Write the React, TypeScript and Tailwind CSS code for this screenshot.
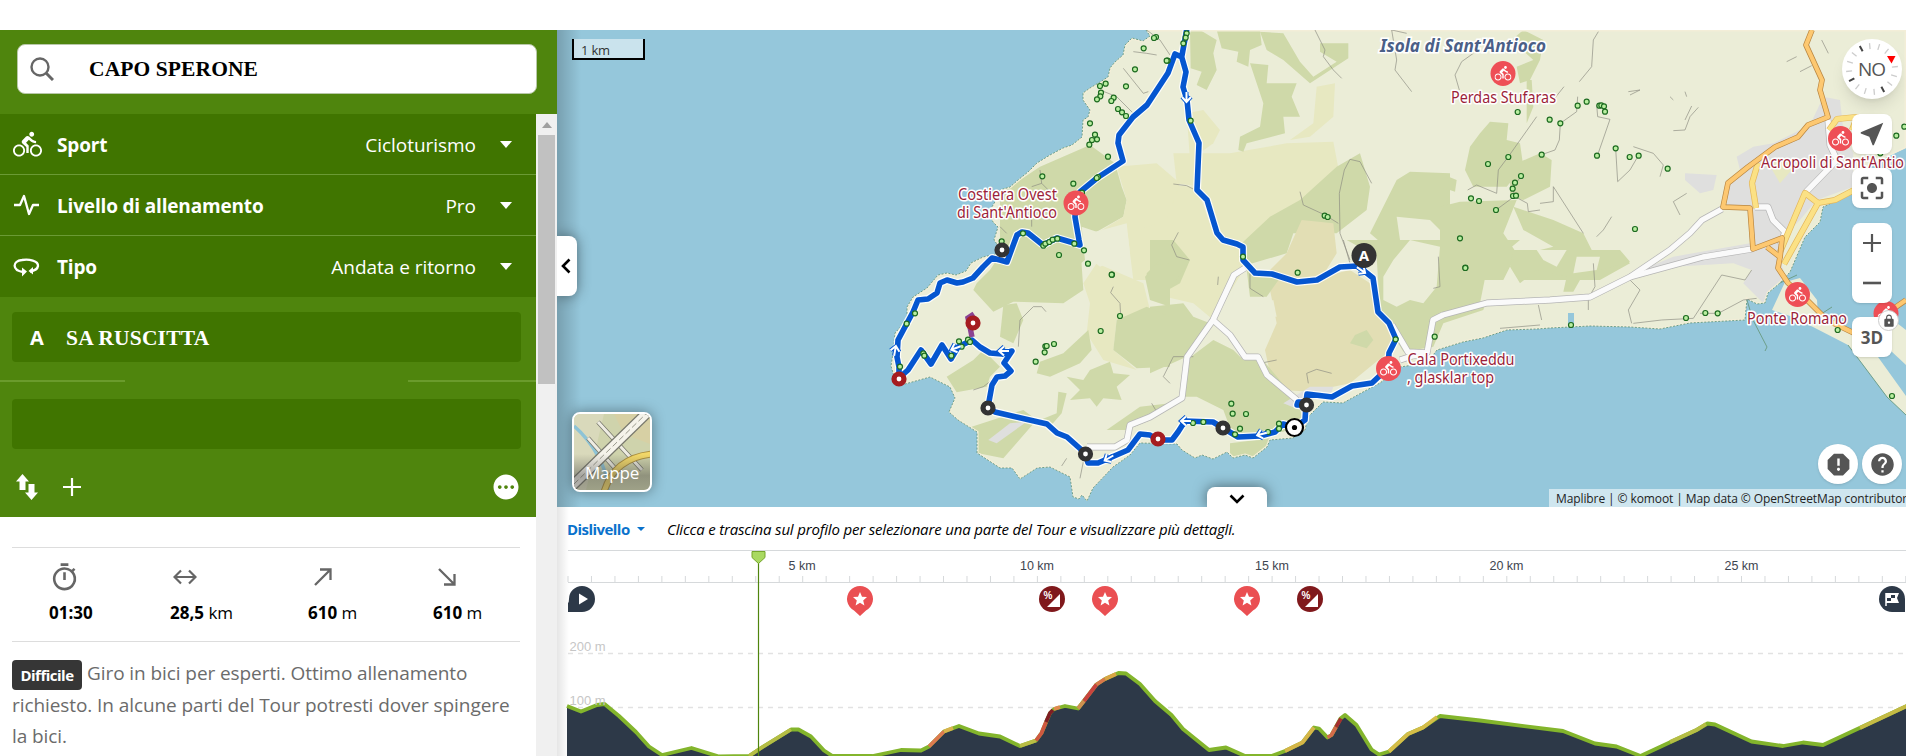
import React from "react";
import {
  MdCenterFocusStrong,
  MdDirectionsBike,
  MdHelp,
  MdLock,
  MdNearMe,
  MdOutlineTimer,
  MdPending,
  MdReport,
} from "react-icons/md";

type Pt = [number, number];

const WATER = "#95c7db";
const LAND = "#ebedd7";
const GREEN = "#cfd9a9";
const YELLOW = "#e7e8c1";
const TAN = "#e2deb4";
const URBAN = "#dfdfde";

const TILES = {
  a: { x: 1000, y: 20 },
  b: { x: 1440, y: 20 },
  c: { x: 850, y: 240 },
  d: { x: 1150, y: 240 },
  e: { x: 1500, y: 250 },
};

function Tile({ id, children }: { id: keyof typeof TILES; children: React.ReactNode }) {
  const t = TILES[id];
  return <g transform={`translate(${t.x} ${t.y}) scale(0.33333)`}>{children}</g>;
}

const ISLAND =
  "1146,30 1150,36 1143,41 1132,38 1125,45 1123,55 1115,62 1110,68 1108,77 1100,82 1090,88 1083,93 1083,100 1090,110 1088,117 1083,120 1082,137 1072,145 1063,148 1050,155 1037,163 1028,172 1018,180 1010,187 1000,190 996,200 989,212 993,222 998,227 994,240 999,247 996,254 983,257 971,263 966,271 956,275 947,273 938,275 927,288 913,297 907,307 907,320 895,333 893,353 891,366 895,380 905,384 930,377 950,387 955,398 949,412 958,420 977,432 977,453 1000,468 1012,468 1020,479 1037,468 1050,467 1070,477 1073,497 1079,499 1082,495 1087,501 1093,488 1113,467 1130,455 1140,443 1177,444 1182,450 1195,458 1202,455 1213,459 1227,452 1233,458 1245,455 1253,458 1267,447 1270,440 1293,438 1305,430 1308,417 1323,402 1343,403 1363,392 1380,383 1388,377 1400,367 1427,363 1437,350 1463,342 1483,338 1507,330 1537,329 1550,328 1590,326 1630,327 1660,329 1690,323 1745,320 1747,299 1757,304 1765,303 1768,293 1780,283 1790,272 1805,237 1820,222 1823,207 1853,193 1870,165 1906,148 1906,30";

const GREENS: [keyof typeof TILES, string, string][] = [
  ["a", YELLOW, "520,400 690,400 860,370 1000,365 1020,470 960,520 900,600 720,670 640,640 600,500 530,490"],
  ["a", YELLOW, "390,490 590,500 640,640 730,690 690,780 400,780 380,620"],
  ["a", YELLOW, "950,200 1005,190 1000,290 930,350 870,360 940,310"],
  ["a", YELLOW, "560,280 610,270 660,330 640,370 570,420"],
  ["c", YELLOW, "700,130 740,70 880,130 900,210 800,240 790,330 860,390 760,360 710,280 720,190"],
  ["d", YELLOW, "0,0 270,0 280,90 190,240 130,190 0,160"],
  ["d", GREEN, "0,0 70,0 120,60 90,130 0,180"],
  ["d", GREEN, "0,200 100,190 130,230 180,250 110,350 0,400"],
  ["a", GREEN, "570,30 600,30 650,60 640,100 650,150 620,210 590,195 605,155 572,145"],
  ["a", GREEN, "650,30 780,30 785,75 750,90 745,140 710,125 715,95 665,85"],
  ["a", GREEN, "780,35 850,40 900,125 940,170 1010,125 960,95 960,70 1045,70 1045,115 930,190 850,120 800,90"],
  ["a", GREEN, "750,130 805,135 800,190 890,190 875,230 900,290 850,290 855,340 740,370 730,395 715,390 720,350 780,320 790,250 770,190"],
  ["a", GREEN, "0,510 60,480 120,440 270,375 345,430 365,500 380,540 370,590 290,635 245,620 255,720 180,780 0,780 0,590"],
  ["a", YELLOW, "350,440 470,430 540,490 500,600 390,640 290,640 370,590 380,540"],
  ["a", LAND, "270,640 380,610 390,700 300,740 250,700"],
  ["c", GREEN, "380,130 420,90 440,60 490,0 690,0 700,150 640,190 490,185 430,215 370,150"],
  ["a", GREEN, "810,590 900,540 1010,440 1080,400 1110,500 1100,570 1010,640 880,640 860,700 740,735 725,670"],
  ["a", TAN, "905,600 1000,610 1010,700 960,780 780,780 860,700"],
  ["a", GREEN, "440,760 520,680 570,720 530,780 440,780"],
  ["a", GREEN, "1110,640 1190,480 1230,455 1350,460 1350,780 1210,780 1180,700"],
  ["a", LAND, "1190,590 1290,600 1350,660 1270,700 1200,660"],
  ["d", TAN, "380,110 440,130 600,90 660,130 690,230 735,300 710,340 600,430 480,455 400,450 360,400 345,330 380,250 360,150"],
  ["d", GREEN, "290,90 400,100 350,170 300,170"],
  ["d", GREEN, "110,360 190,300 250,330 280,360 330,350 440,480 460,540 400,575 250,590 220,510 140,470 100,470"],
  ["d", GREEN, "240,610 360,595 350,620 310,655 240,650"],
  ["d", GREEN, "590,0 1110,0 1050,50 1000,210 880,250 850,320 760,335 690,220 680,50"],
  ["d", LAND, "700,110 730,60 780,0 870,20 860,140 820,190 780,180 740,200 700,180"],
  ["d", LAND, "1010,90 1200,40 1200,180 990,190"],
  ["d", LAND, "325,195 370,180 380,230 350,230"],
  ["d", GREEN, "615,285 650,270 670,300 650,325 600,310"],
  ["b", GREEN, "120,340 150,305 205,310 200,360 240,370 250,440 200,500 100,500 75,450 90,380"],
  ["b", GREEN, "0,560 60,545 230,540 190,640 230,700 190,780 0,780"],
  ["b", GREEN, "230,430 300,400 335,420 330,500 250,540 210,530 210,470"],
  ["b", GREEN, "220,560 340,600 430,640 460,700 540,695 570,730 480,780 240,780 260,700 340,680 250,630"],
  ["b", GREEN, "215,60 250,30 310,60 300,120 270,180 240,190 230,140 280,120"],
  ["b", GREEN, "260,180 275,180 280,260 260,310"],
  ["b", GREEN, "0,460 50,480 45,515 0,500"],
  ["e", GREEN, "40,0 360,0 390,35 300,60 240,90 220,125 190,125 200,80 110,60 60,100 30,50"],
  ["e", LAND, "110,0 200,0 170,50 130,30"],
  ["e", LAND, "230,20 300,20 290,60 220,70"],
  ["c", GREEN, "800,240 890,200 960,230 960,380 860,385 790,330"],
  ["c", GREEN, "885,110 920,75 960,70 960,200 900,180"],
  ["c", GREEN, "290,410 370,360 400,330 450,380 420,410 410,440 320,457"],
  ["c", GREEN, "365,560 520,510 560,540 460,655 385,640 380,590"],
  ["c", GREEN, "650,410 700,420 720,390 780,365 790,400 840,405 800,440 815,480 760,475 740,500 720,475 660,480 690,450"],
  ["c", GREEN, "560,400 570,365 640,340 715,270 725,330 690,370 600,410"],
  ["c", GREEN, "625,455 650,460 635,520 600,560 570,540 620,520"],
  ["c", GREEN, "460,195 500,190 520,240 490,310 450,290"],
  ["c", GREEN, "770,570 870,500 960,490 900,540 830,570"],
  ["c", URBAN, "415,600 480,550 530,545 440,610"],
  ["d", URBAN, "400,490 480,440 550,440 540,470 480,480 450,510"],
  ["b", URBAN, "870,480 900,450 890,410 940,380 1000,370 1110,315 1150,230 1200,240 1210,330 1240,400 1240,500 1130,540 1080,600 1040,640 1030,700 940,690 940,570 860,560"],
  ["b", URBAN, "735,460 830,465 820,510 780,520 735,480"],
  ["b", YELLOW, "985,430 1040,420 1055,450 1020,490"],
  ["e", URBAN, "410,65 520,20 750,-20 830,0 850,60 850,100 790,160 730,100 755,60 700,40 520,50"],
];

const PATHS: [keyof typeof TILES, string][] = [
  ["a", "M440,30 L480,60 510,105 M370,145 L430,220 445,215 M470,105 L440,100 400,95 M300,210 L350,230 400,280"],
  ["a", "M945,30 L975,90 970,110 1000,150 1025,175 M1220,40 L1175,30 1190,120 1185,150 1235,215"],
  ["a", "M900,515 L910,555 975,585 1015,610 M1115,490 L1080,425 1050,418 1033,450 1018,520 1020,640 1050,720 M520,492 L560,497 585,510 M535,637 L515,675 530,710 568,720"],
  ["a", "M0,620 L20,640 M120,450 L125,490 95,500 M125,490 L150,515 M95,560 L95,620"],
  ["b", "M475,35 L460,60 455,140 418,185 M372,200 L340,240 M290,290 L205,410 175,450 170,520 110,495 83,510 M413,230 L410,275 361,310 358,360 345,390 305,404 M470,255 L473,290 510,298 473,405 M527,385 L533,485 570,450 595,407"],
  ["b", "M243,468 L218,506 225,530 262,550 265,575 300,570 M300,550 L340,545 340,500 430,640 M515,590 L490,630 470,650 M580,380 L640,400 670,435 660,470 M168,570 L225,528 M100,100 L65,125 45,165 58,210"],
  ["b", "M735,215 L740,230 M690,230 L700,240 M775,262 L750,290 735,330 700,332 M735,300 L755,258 M1040,125 L1070,110 M1080,155 L1115,137 M1145,60 L1165,100 M740,520 L700,545 720,585 M565,215 L600,210 570,225"],
  ["d", "M580,0 L600,70 M865,50 L870,140 850,145 M205,110 L203,135 M300,100 L300,145 340,170 M475,430 L470,400 500,388 545,400 M130,350 L70,350 40,410 60,430 M330,370 L380,360"],
  ["e", "M280,40 L285,110 265,145 265,180 M390,90 L420,120 385,180 395,220 M0,235 L120,225 M115,165 L125,210 M400,220 L485,210 580,205 665,75 735,90 755,60 M600,190 L655,190 730,150 770,145"],
  ["c", "M370,450 L400,440 440,410 M505,320 L510,240 550,200 575,200 588,215 M790,140 L782,158 810,190 812,228 M650,655 L635,678 M700,665 L690,715 M905,490 L920,515"],
];

const CIRCLES: Record<string, Pt[]> = {
  a: [[560,40],[557,53],[550,70],[468,51],[462,54],[431,85],[503,122],[500,122],[405,148],[378,199],[317,191],[300,198],[303,218],[301,229],[291,238],[341,233],[334,243],[354,267],[366,277],[378,288],[270,310],[285,344],[291,358],[276,360],[268,374],[324,410],[127,469],[220,491],[294,471],[290,474],[246,518],[572,302],[69,640],[130,677],[136,671],[148,666],[158,659],[172,656],[223,671],[252,691],[177,705],[264,731],[336,764],[974,587],[983,591],[729,710],[893,758],[5,664]],
  b: [[233,276],[329,299],[361,310],[413,257],[440,245],[478,257],[484,256],[492,259],[495,275],[527,385],[471,407],[569,411],[596,407],[683,446],[205,411],[144,432],[305,404],[243,468],[225,488],[218,506],[219,528],[228,527],[93,535],[117,543],[168,570],[60,655],[76,743],[585,627],[1393,320],[1369,347],[1321,400]],
  c: [[195,220],[170,251],[150,380],[327,304],[335,320],[354,299],[360,306],[220,340],[223,347],[304,347],[785,104],[810,228],[752,273],[612,312],[586,319],[590,318],[584,337],[557,365]],
  d: [[244,491],[248,521],[288,522],[270,566],[255,583],[103,543],[129,549],[160,546],[387,551],[387,566],[354,576],[737,298],[854,290],[946,84]],
  e: [[213,225],[558,204],[616,189],[653,190],[1013,240],[1176,438]],
};

const WHITE_ROADS = [
  "1245,268 1234,275 1213,320 1187,357 1182,398 1150,417 1130,425 1127,440 1115,447 1087,447",
  "1213,320 1230,335 1245,357 1258,357 1267,375 1297,400",
  "1392,325 1408,352 1427,353 1433,320 1443,315 1487,303 1550,300 1590,297 1630,277 1670,250 1690,233 1702,220 1722,209",
  "1400,360 1412,356 1427,353",
  "1630,277 1703,257 1752,249",
  "1755,207 1768,207 1773,220 1785,232 1780,245",
  "1806,192 1837,160 1830,145 1828,120",
];
const ORANGE_ROADS = [
  "1812,30 1806,45 1822,80 1820,90 1828,117 1808,125 1798,137 1775,147 1748,167 1728,183 1723,207 1750,208 1753,249 1782,238 1780,258",
  "1767,247 1780,257 1778,268 1788,283 1805,298 1827,320 1860,336",
  "1880,318 1906,300",
];
const YELLOW_ROADS = [
  "1829,130 1837,119 1857,117 1852,130",
  "1758,163 1752,183 1756,208",
  "1780,252 1805,193 1818,203 1784,264",
  "1818,203 1835,200 1858,188",
];

function Roads({ list, casing, fill, w }: { list: string[]; casing: string; fill: string; w: number }) {
  return (
    <g fill="none" strokeLinejoin="round">
      {list.map((p) => <polyline key={p} points={p} stroke={casing} strokeWidth={w + 1.4} />)}
      {list.map((p) => <polyline key={p} points={p} stroke={fill} strokeWidth={w} />)}
    </g>
  );
}

const ROUTE =
  "M1187,28 L1181.7,57 1175,54 1168,73 1147,105 1133,117 1119,135 1118,143 1123,161 1097,178 1080,192 1076,203 1075,217 1079,240 1080,245 1074,243 1057,238 1043,245 1028,233 1022,232 1017,235 1007,262 1000,260 992,258 983,267 973,278 963,282 957,283 947,280 940,283 937,293 928,299 918,300 913,312 898,340 897,357 899,367 899,378 908,370 921,350 931,364 942,345 951,359 958,347 972,340 980,347 990,353 1002,354 1012,351 1004,363 1011,371 1005,376 997,377 992,385 988,407 995,412 1047,424 1057,433 1067,437 1085,453 1088,463 1098,463 1112,457 1128,450 1140,434 1150,435 1158,440 1172,440 1178,432 1185,421 1213,422 1223,428 1238,437 1260,436 1275,432 1283,424 1295,427 1305,420 1306,405 1297,405 1298,402 1306,402 1307,394 1332,397 1352,386 1372,383 1388,368 1389,353 1396,339 1389,323 1378,312 1373,278 1363,270 1357,266 1340,267 1317,280 1297,282 1272,274 1255,273 1243,260 1243,247 1237,244 1223,240 1217,233 1207,200 1197,190 1199,143 1189,120 1187,100 1183,87 1186,72 1181.7,57";

const ARROWS: [number, number, number][] = [
  [1186.5, 97, 90],
  [1361, 270, 35],
  [1004, 351, 180],
  [956, 348, 160],
  [895, 351, -80],
  [1109, 458, 150],
  [1262, 434, 165],
  [1186, 421, 180],
];

const WAYPOINTS: [number, number, string][] = [
  [1002, 250, "#333"],
  [973, 323, "#a51c20"],
  [899, 379, "#a51c20"],
  [988, 408, "#333"],
  [1085.5, 454, "#333"],
  [1158, 439, "#a51c20"],
  [1223, 428, "#333"],
  [1306.5, 405, "#333"],
];

function BikePin({ x, y }: { x: number; y: number }) {
  return (
    <g>
      <circle cx={x} cy={y} r={12.5} fill="#ee4f56" />
      <MdDirectionsBike x={x - 8.5} y={y - 8.5} size={17} color="white" />
    </g>
  );
}

function MapLabel({ x, y, w, children }: { x: number; y: number; w: number; children: string }) {
  return (
    <text
      x={x}
      y={y}
      textLength={w}
      lengthAdjust="spacingAndGlyphs"
      fill="#9c1f3a"
      stroke="white"
      strokeWidth={3.2}
      strokeLinejoin="round"
      paintOrder="stroke"
      className="font-['Noto_Sans',sans-serif] text-[15.5px]"
    >
      {children}
    </text>
  );
}

function TerrainMap() {
  return (
    <svg viewBox="557 30 1349 477" className="block h-[477px] w-full" aria-hidden="true">
      <rect x="557" y="30" width="1349" height="477" fill={WATER} />
      <polygon points={ISLAND} fill={LAND} />
      <polygon points="1772,310 1785,282 1800,278 1817,300 1818,316 1852,333 1873,350 1906,396 1906,415 1887,397 1848,345 1815,328 1793,317" fill={LAND} />
      <polygon points="1893,320 1906,330 1906,365 1890,350 1880,335" fill={LAND} />
      <clipPath id="land"><polygon points={ISLAND} /></clipPath>
      <g clipPath="url(#land)">
        {GREENS.map(([t, c, p]) => <Tile key={p} id={t}><polygon points={p} fill={c} /></Tile>)}
        <polygon points={ISLAND} fill="none" stroke="#f3eed8" strokeWidth="3" />
      </g>
      <polyline points={ISLAND.split(" ").slice(0, -2).join(" ")} fill="none" stroke="#6d9f8a" strokeWidth="1" strokeDasharray="2 1.5" />
      <path d="M1747,300 L1753,320 1767,347 1765,351 M1848,345 L1887,397 1906,415 M1780,283 L1797,275 M1818,316 L1832,307" fill="none" stroke="#6d9f8a" />
      <rect x="1568" y="313" width="6" height="12" fill={WATER} />
      {PATHS.map(([t, d]) => (
        <Tile key={d} id={t}><path d={d} fill="none" stroke="#8b8b80" strokeWidth="2" /></Tile>
      ))}
      <Roads list={WHITE_ROADS} casing="#b5b5b5" fill="#fafafa" w={5.4} />
      <Roads list={YELLOW_ROADS} casing="#e3b65a" fill="#fbe185" w={4.8} />
      <Roads list={ORANGE_ROADS} casing="#b98640" fill="#fdc871" w={4.2} />
      <path d={ROUTE} fill="none" stroke="white" strokeOpacity="0.9" strokeWidth="8" strokeLinejoin="round" />
      <path d={ROUTE} fill="none" stroke="#0556d0" strokeWidth="5.6" strokeLinejoin="round" />
      <path d="M972,337 L970,327 968,318 974,314" fill="none" stroke="#8b4392" strokeWidth="5.4" />
      {Object.entries(CIRCLES).map(([t, pts]) => (
        <Tile key={t} id={t as keyof typeof TILES}>
          {pts.map(([x, y]) => (
            <circle key={`${x}-${y}`} cx={x} cy={y} r="7.5" fill="#b9eea0" stroke="#1d6b20" strokeWidth="3.6" />
          ))}
        </Tile>
      ))}
      {ARROWS.map(([x, y, r]) => (
        <g key={x} transform={`translate(${x} ${y}) rotate(${r})`} fill="none">
          <path d="M-5,0 L5,0 M0,-4.5 L5,0 0,4.5" stroke="#0556d0" strokeWidth="4" />
          <path d="M-5,0 L5,0 M0,-4.5 L5,0 0,4.5" stroke="white" strokeWidth="2" />
        </g>
      ))}
      {WAYPOINTS.map(([x, y, c]) => (
        <circle key={x} cx={x} cy={y} r="5" fill="white" stroke={c} strokeWidth="5.2" />
      ))}
      <circle cx="1294.5" cy="427.5" r="8.5" fill="white" stroke="black" strokeWidth="2.2" />
      <circle cx="1294.5" cy="427.5" r="2.6" />
      <circle cx="1364" cy="255.5" r="12.5" fill="#333" />
      <text x="1364" y="261" textAnchor="middle" fill="white" className="font-['Noto_Sans',sans-serif] text-[15px] font-bold">A</text>
      <BikePin x={1503} y={73.5} />
      <BikePin x={1076} y={203} />
      <BikePin x={1840.5} y={138.5} />
      <BikePin x={1797.5} y={294.5} />
      <BikePin x={1886} y={313.5} />
      <BikePin x={1388.5} y={368.5} />
      <text x="1380" y="51.5" textLength="166" lengthAdjust="spacingAndGlyphs" fill="#4b5f87" stroke="white" strokeWidth="3.2" paintOrder="stroke" className="font-['Noto_Sans',sans-serif] text-[17px] font-bold italic">Isola di Sant'Antioco</text>
      <MapLabel x={958} y={200} w={99}>Costiera Ovest</MapLabel>
      <MapLabel x={957} y={217.5} w={100}>di Sant'Antioco</MapLabel>
      <MapLabel x={1451} y={102.5} w={105}>Perdas Stufaras</MapLabel>
      <MapLabel x={1761} y={168} w={143}>Acropoli di Sant'Antio</MapLabel>
      <MapLabel x={1747} y={324} w={100}>Ponte Romano</MapLabel>
      <MapLabel x={1407.5} y={365} w={107}>Cala Portixeddu</MapLabel>
      <MapLabel x={1407} y={383} w={87}>, glasklar top</MapLabel>
    </svg>
  );
}

function Compass() {
  const ticks = Array.from({ length: 16 }, (_, i) => i * 22.5);
  return (
    <svg viewBox="-30 -30 60 60" className="size-[60px] rounded-full bg-white shadow-lg">
      {ticks.map((a, i) => (
        <line
          key={a}
          x1="0"
          y1="-20"
          x2="0"
          y2="-26"
          transform={`rotate(${a - 28})`}
          stroke={i % 4 === 0 ? "#444" : "#ccc"}
          strokeWidth={i % 4 === 0 ? 2 : 1.3}
          className={i === 4 ? "hidden" : "inline"}
        />
      ))}
      <polygon points="15,-13 23.5,-13 19.5,-5.5" fill="#f00" />
      <text x="0" y="7" textAnchor="middle" textLength="28" fill="#555" className="font-['Open_Sans',sans-serif] text-[19px]">NO</text>
    </svg>
  );
}

function SquareButton({ children }: { children: React.ReactNode }) {
  return <div className="flex size-10 items-center justify-center rounded-lg bg-white text-[#555] shadow">{children}</div>;
}

function MapPanel() {
  return (
    <div className="relative h-[477px] shrink-0 overflow-hidden">
      <TerrainMap />
      <div className="absolute inset-y-0 left-0 w-6 bg-linear-to-r from-black/20 to-transparent" />
      <div className="absolute top-[9px] left-[15px] h-[21px] w-[73px] border-2 border-t-0 border-black bg-white/50 pl-[7px] font-['Open_Sans',sans-serif] text-[13px] leading-[23px] tracking-[-0.2px] text-[#333]">
        1 km
      </div>
      <div className="absolute top-[206px] left-0 flex h-[60px] w-5 items-center justify-center rounded-r-lg bg-white pr-0.5 shadow-[0_0_14px_rgba(0,0,0,0.45)]">
        <svg viewBox="0 0 10 16" className="h-4 w-2.5"><path d="M8.500,1.500 L2,8 8.500,14.500" fill="none" stroke="black" strokeWidth="2.600" /></svg>
      </div>
      <div className="absolute top-[382px] left-[15px] size-20 overflow-hidden rounded-lg border-2 border-white bg-[#cfd3ac] shadow-[0_0_14px_rgba(0,0,0,0.4)]">
        <svg viewBox="0 0 76 76" className="size-full">
          <defs>
            <linearGradient id="shade" x1="0" y1="0" x2="0" y2="1">
              <stop offset="0" stopColor="#444" stopOpacity="0" />
              <stop offset="0.6" stopColor="#444" stopOpacity="0.45" />
              <stop offset="1" stopColor="#444" stopOpacity="0.35" />
            </linearGradient>
          </defs>
          <polygon points="0,0 30,0 12,76 0,76" fill="#d9d9bb" />
          <polygon points="40,0 76,0 76,30 50,20" fill="#d7d0a4" />
          <path d="M0,12 Q14,24 24,42 T34,76" fill="none" stroke="#8dc3d6" strokeWidth="3.500" />
          <path d="M14,24 L46,60 M24,8 L68,56" stroke="#77776c" strokeWidth="4.500" />
          <path d="M14,24 L46,60 M24,8 L68,56" stroke="#eeece2" strokeWidth="3" />
          <path d="M-2,72 L78,-6" stroke="#77776c" strokeWidth="11" />
          <path d="M-2,72 L78,-6" stroke="#f5f3ea" strokeWidth="8.500" />
          <path d="M0,70 L76,-4" stroke="#99998c" strokeWidth="1" strokeDasharray="6 3" />
          <path d="M30,78 Q40,44 78,40" fill="none" stroke="#ad9140" strokeWidth="7" />
          <path d="M30,78 Q40,44 78,40" fill="none" stroke="#f3d868" strokeWidth="5" />
          <rect y="40" width="76" height="36" fill="url(#shade)" />
        </svg>
        <span className="absolute inset-x-0 bottom-[7px] text-center font-['Open_Sans',sans-serif] text-[17px] leading-5 tracking-[-0.2px] text-white">Mappe</span>
      </div>
      <div className="absolute top-[457px] left-[650px] flex h-5 w-[60px] items-center justify-center rounded-t-lg bg-white pt-1 shadow-[0_0_14px_rgba(0,0,0,0.5)]">
        <svg viewBox="0 0 16 10" className="h-2.5 w-4"><path d="M1.500,1.500 L8,8 14.500,1.500" fill="none" stroke="black" strokeWidth="2.600" /></svg>
      </div>
      <div className="absolute top-[9px] left-[1285px]"><Compass /></div>
      <div className="absolute top-[84px] left-[1295px] flex flex-col gap-[14px]">
        <SquareButton><MdNearMe size={30} /></SquareButton>
        <SquareButton><MdCenterFocusStrong size={30} /></SquareButton>
        <div className="mt-px flex h-[80px] w-10 flex-col items-center justify-between rounded-lg bg-white py-[11px] text-[#555] shadow">
          <svg viewBox="0 0 18 18" className="size-[18px]"><path d="M9,0 V18 M0,9 H18" stroke="#555" strokeWidth="2.200" /></svg>
          <svg viewBox="0 0 18 18" className="size-[18px]"><path d="M0,9 H18" stroke="#555" strokeWidth="2.600" /></svg>
        </div>
        <div className="relative">
          <SquareButton><span className="pt-0.5 font-['Open_Sans',sans-serif] text-[17px] font-bold">3D</span></SquareButton>
          <span className="absolute -top-[7px] left-[26px] flex size-[21px] items-center justify-center rounded-full border border-[#ccc] bg-white text-[#555]"><MdLock size={14} /></span>
        </div>
      </div>
      <div className="absolute top-[414px] left-[1261px] flex gap-1">
        <div className="flex size-10 items-center justify-center rounded-full bg-white text-[#555] shadow"><MdReport size={29} /></div>
        <div className="flex size-10 items-center justify-center rounded-full bg-white text-[#555] shadow"><MdHelp size={27} /></div>
      </div>
      <div className="absolute right-0 bottom-0 h-[18px] w-[357px] overflow-hidden bg-white/55 pl-[7px] font-['Open_Sans',sans-serif] text-[12px] leading-[19px] tracking-[-0.1px] whitespace-nowrap text-[#222]">
        Maplibre | © komoot | Map data © OpenStreetMap contributor
      </div>
    </div>
  );
}

const PROFILE: Pt[] = [
  [567,706],[581,711.5],[597,705],[604.5,704],[619,716],[636,732],[649,746.5],[662,755],[691.500,748],[719,756.500],[749,756],[761,748],[791,729.500],[798.500,729.500],[811,736.500],[824,750.500],[832.500,756],[872.500,756],[901,750],[921,750.500],[929,746.500],[944,731.500],[959,726],[979,733.500],[1000,736.500],
  [1020,746],[1036,740.500],[1041.500,733],[1050,713],[1054,709],[1065,706],[1078,708.500],[1096.500,684.500],[1105,679],[1118.500,673],[1126,673.500],[1140,684],[1155,701],[1171.500,715],[1183,729],[1209,750],[1226,747.500],[1245,756],[1271.500,756],[1285,751],[1302.500,742.500],[1314,727.500],[1319,728.500],[1327.500,737.500],[1331.500,735],[1340.500,718.500],[1345,715],[1356.500,725],[1371.500,749.500],[1379,754.500],[1389,751.500],[1408,734],[1423,727.500],[1440,716],
  [1480,720.500],[1563,731],[1595,743.500],[1616.500,746.500],[1640.500,756],[1696.500,730],[1707.500,723.500],[1715,724.500],[1751.500,741.500],[1783,746],[1803,742.500],[1823,745],[1907,706],
];

const STEEP: [string, string][] = [
  ["749,756 761,748 791,729.5", "#b5bd45"],
  ["929,746.5 944,731.5", "#dd7a50"],
  ["944,731.5 953,728", "#d9b44c"],
  ["1020,746 1036,740.5", "#b9bd45"],
  ["1036,740.5 1041.5,733 1046,722", "#cf5840"],
  ["1046,722 1050,713 1053,710", "#7f1d24"],
  ["1054,709 1060,707", "#e0894e"],
  ["1078,708.5 1084,701", "#cf9050"],
  ["1084,701 1096.5,684.5", "#c9443f"],
  ["1096.500,684.500 1105,679", "#d9774a"],
  ["1105,679 1116,674", "#d9a545"],
  ["1285,751 1302.5,742.5 1314,727.5", "#d5b548"],
  ["1327.5,737.5 1331.5,735 1336,727", "#d36b4a"],
  ["1336,727 1341,718.5", "#a52f30"],
  ["1389,751.5 1408,734 1423,727.5 1437,717", "#d5bd48"],
  ["1670,742 1696.5,730 1706,724", "#b5bd45"],
  ["1860,728 1907,706", "#c5bb45"],
];

const KM_LABELS: [number, string][] = [[802, "5 km"], [1037, "10 km"], [1272, "15 km"], [1506.500, "20 km"], [1741.500, "25 km"]];

function StarPin({ x }: { x: number }) {
  return (
    <g transform={`translate(${x} 599)`}>
      <path d="M0,17 L-6,11.500 A13,13 0 1 1 6,11.500 Z" fill="#ea4f52" />
      <polygon points="0,-7 2,-2.300 7,-1.900 3.200,1.500 4.400,6.500 0,3.800 -4.400,6.500 -3.200,1.500 -7,-1.900 -2,-2.300" fill="white" />
    </g>
  );
}

function GradePin({ x }: { x: number }) {
  return (
    <g transform={`translate(${x} 599)`}>
      <circle r="13" fill="#80191c" />
      <polygon points="8,-5 8,8 -5,8" fill="white" />
      <text x="-8.500" y="0" fill="white" className="font-['Liberation_Sans',sans-serif] text-[10px] font-bold">%</text>
    </g>
  );
}

function ElevationChart() {
  const line = PROFILE.map((p) => p.join(",")).join(" ");
  return (
    <svg viewBox="557 550 1349 206" className="block h-[206px] w-full">
      <path d="M568,550.500 H1906 M568,582.500 H1906" stroke="#d6d9db" />
      {Array.from({ length: 58 }, (_, i) => (
        <line key={i} x1={568 + i * 23.470} x2={568 + i * 23.470} y1="576" y2="582" stroke="#d6d9db" />
      ))}
      {KM_LABELS.map(([x, t]) => (
        <text key={t} x={x} y="570" textAnchor="middle" fill="#3e4550" className="font-['Liberation_Sans',sans-serif] text-[12.500px]">{t}</text>
      ))}
      <path d="M568,653.500 H1906 M568,707.500 H1906" stroke="#e2e2e2" strokeWidth="1.500" strokeDasharray="5 5" />
      <polygon points={`567,760 ${line} 1907,760`} fill="#2d3948" />
      <polyline points={line} fill="none" stroke="#83b52c" strokeWidth="3.800" strokeLinejoin="round" />
      {STEEP.map(([p, c]) => <polyline key={p} points={p} fill="none" stroke={c} strokeWidth="3.800" />)}
      <text x="569.500" y="650.500" fill="#c6c6c6" className="font-['Liberation_Sans',sans-serif] text-[13px]">200 m</text>
      <text x="569.500" y="704.500" fill="#c6c6c6" className="font-['Liberation_Sans',sans-serif] text-[13px]">100 m</text>
      <line x1="758.500" x2="758.500" y1="560" y2="756" stroke="#4f850d" strokeWidth="1.200" />
      <path d="M752,551.500 H765 V557.500 L758.500,563.500 752,557.500 Z" fill="#a9d961" stroke="#76a62d" strokeLinejoin="round" />
      <path d="M582,586 A13,13 0 1 1 582,612 H568 V603 Q569,602 569,599 A13,13 0 0 1 582,586 Z" fill="#2d3948" />
      <polygon points="579,593.500 588,599 579,604.500" fill="white" />
      <path d="M1892,586 A13,13 0 1 0 1892,612 H1905 V599 A13,13 0 0 0 1892,586 Z" fill="#2d3948" />
      <path d="M1886,593 V606" stroke="white" strokeWidth="1.500" />
      <path d="M1886,593 H1899 L1897,598 1899,603 H1886 Z" fill="white" />
      <path d="M1887,598 h4 v-3 h4 v3 h-4 v3 h-4 Z" fill="#2d3948" />
      <StarPin x={860} />
      <StarPin x={1105} />
      <StarPin x={1247} />
      <GradePin x={1052} />
      <GradePin x={1310} />
    </svg>
  );
}

function ElevationPanel() {
  return (
    <div className="relative flex h-[249px] flex-col bg-white">
      <div className="flex h-[43px] items-center pt-px pl-2.5 font-['Open_Sans',sans-serif]">
        <span className="w-[65px] text-[15px] font-bold tracking-[-0.55px] text-[#0a72cc]">Dislivello</span>
        <svg viewBox="0 0 8 4" className="ml-[5px] h-1 w-2"><path d="M0,0 H8 L4,4 Z" fill="#0a72cc" /></svg>
        <span className="ml-[22px] text-[15px] tracking-[-0.17px] whitespace-nowrap text-black italic">
          Clicca e trascina sul profilo per selezionare una parte del Tour e visualizzare più dettagli.
        </span>
      </div>
      <ElevationChart />
      <div className="absolute inset-y-0 left-0 w-3 bg-linear-to-r from-black/10 to-transparent" />
    </div>
  );
}

function SettingRow({ icon, label, value, last }: { icon: React.ReactNode; label: string; value: string; last?: boolean }) {
  return (
    <div className={last ? "flex h-[61px] items-center bg-[#407500] pl-[13px]" : "flex h-[61px] items-center border-b border-[#6b9a35] bg-[#407500] pl-[13px]"}>
      <div className="flex w-11 items-center">{icon}</div>
      <span className="pt-0.5 text-[19px] font-bold tracking-[-0.17px]">{label}</span>
      <span className="ml-auto pt-0.5 text-[19px] tracking-[-0.04px]">{value}</span>
      <svg viewBox="0 0 12 7" className="mr-6 ml-6 h-[7px] w-3"><path d="M0,0 H12 L6,7 Z" fill="white" /></svg>
    </div>
  );
}

function Stat({ icon, value, unit }: { icon: React.ReactNode; value: string; unit?: string }) {
  return (
    <div className="flex flex-col">
      <div className="flex h-8 items-center">{icon}</div>
      <div className="mt-2 text-[17px] leading-6 text-black"><b>{value}</b>{unit ? ` ${unit}` : ""}</div>
    </div>
  );
}

function Sidebar() {
  return (
    <div className="flex w-[557px] shrink-0 flex-col font-['Open_Sans',sans-serif]">
      <div className="h-[84px] bg-[#4f850d] pt-[14px] pl-[17px]">
        <div className="flex h-[50px] w-[520px] items-center rounded-lg border border-[#b8c8a8] bg-white pl-3">
          <svg viewBox="0 0 24 24" className="size-6" fill="none" stroke="#666" strokeWidth="2.400"><circle cx="10" cy="10" r="8.500" /><path d="M16,16 L23,23" strokeWidth="3" /></svg>
          <span className="ml-[35px] font-['Liberation_Serif',serif] text-[21.500px] font-bold tracking-[0.1px] text-black">CAPO SPERONE</span>
        </div>
      </div>
      <div className="flex h-[642px]">
        <div className="flex w-[536px] flex-col text-white">
          <SettingRow icon={<MdDirectionsBike size={29} />} label="Sport" value="Cicloturismo" />
          <SettingRow
            icon={<svg viewBox="0 0 28 24" className="h-6 w-7"><path d="M1,12 H7 L11,3 L16,21 L20,12 H26" fill="none" stroke="white" strokeWidth="2.300" strokeLinejoin="round" /></svg>}
            label="Livello di allenamento"
            value="Pro"
          />
          <SettingRow
            last
            icon={
              <svg viewBox="0 0 28 20" className="h-5 w-7">
                <path d="M10,15 C-1,13.500 -1,4 9,3 C16,2 25.500,3.500 25,9 C24.500,12.500 20,14 17,14.500" fill="none" stroke="white" strokeWidth="2.300" />
                <path d="M9,10.500 L14,14.500 L9,19.500 Z M20,10 L15.500,14 L20,17.500 Z" fill="white" />
              </svg>
            }
            label="Tipo"
            value="Andata e ritorno"
          />
          <div className="h-[220px] bg-[#4f850d] pt-[15px]">
            <div className="mr-[15px] ml-3 flex h-[50px] items-center rounded bg-[#407500] pl-[18px]">
              <span className="w-9 pt-0.5 text-[20px] font-bold">A</span>
              <span className="pt-[3px] font-['Liberation_Serif',serif] text-[21.500px] font-bold tracking-[0.2px]">SA RUSCITTA</span>
            </div>
            <div className="mt-[18px] flex justify-between">
              <div className="h-0.5 w-[125px] bg-[#6a9b2c]" />
              <div className="h-0.5 w-[128px] bg-[#6a9b2c]" />
            </div>
            <div className="mt-[17px] mr-[15px] ml-3 h-[50px] rounded bg-[#407500]" />
            <div className="mt-[23px] flex h-[30px] items-center pr-[15px] pl-4">
              <svg viewBox="0 0 22 26" className="h-[26px] w-[22px]" fill="white"><path d="M6.500,0 L13,7.500 H9.500 V16 H3.500 V7.500 H0 Z M15.500,26 L9,18.500 H12.500 V10 H18.500 V18.500 H22 Z" /></svg>
              <svg viewBox="0 0 18 18" className="ml-[25px] size-[18px]"><path d="M9,0 V18 M0,9 H18" stroke="white" strokeWidth="2.200" /></svg>
              <MdPending size={30} className="ml-auto" />
            </div>
          </div>
          <div className="h-[239px] bg-white pt-[30px] pr-4 pl-3">
            <div className="flex h-[95px] border-y border-[#ddd] pt-[13px] text-[#666]">
              <div className="w-[121px] pl-[37px]"><Stat icon={<MdOutlineTimer size={31} />} value="01:30" /></div>
              <div className="w-[138px] pl-[37px]"><Stat icon={<svg viewBox="0 0 24 16" className="ml-[3px] h-4 w-6"><path d="M2,8 H22 M8,1.500 L1.500,8 L8,14.500 M16,1.500 L22.500,8 L16,14.500" fill="none" stroke="#666" strokeWidth="2.200" /></svg>} value="28,5" unit="km" /></div>
              <div className="w-[125px] pl-[37px]"><Stat icon={<svg viewBox="0 0 18 18" className="ml-[6px] size-[18px]"><path d="M1,17 L16,2 M6,1.500 H16.500 V12" fill="none" stroke="#666" strokeWidth="2.300" /></svg>} value="610" unit="m" /></div>
              <div className="pl-[37px]"><Stat icon={<svg viewBox="0 0 18 18" className="ml-[5px] size-[18px]"><path d="M1,1 L16,16 M6,16.500 H16.500 V6" fill="none" stroke="#666" strokeWidth="2.300" /></svg>} value="610" unit="m" /></div>
            </div>
            <div className="pt-4 text-[19px] leading-[31px] tracking-[-0.08px] whitespace-nowrap text-[#6b6b6b]">
              <span className="mr-[5px] inline-block h-[30px] w-[70px] rounded bg-[#363636] text-center align-middle text-[15px] leading-[31px] font-bold tracking-[-0.5px] text-white">Difficile</span>
              Giro in bici per esperti. Ottimo allenamento
              <br />
              richiesto. In alcune parti del Tour potresti dover spingere
              <br />
              la bici.
            </div>
          </div>
        </div>
        <div className="flex w-[21px] flex-col items-center bg-[#f0f0f0]">
          <div className="flex h-[21px] items-center"><svg viewBox="0 0 10 6" className="h-[6px] w-2.5"><path d="M0,6 H10 L5,0 Z" fill="#a0a0a0" /></svg></div>
          <div className="h-[249px] w-[17px] bg-[#c1c1c1]" />
        </div>
      </div>
    </div>
  );
}

export default function App() {
  return (
    <div className="h-[756px] w-[1906px] overflow-hidden bg-white pt-[30px]">
      <div className="flex">
        <Sidebar />
        <div className="flex w-[1349px] flex-col">
          <MapPanel />
          <ElevationPanel />
        </div>
      </div>
    </div>
  );
}
